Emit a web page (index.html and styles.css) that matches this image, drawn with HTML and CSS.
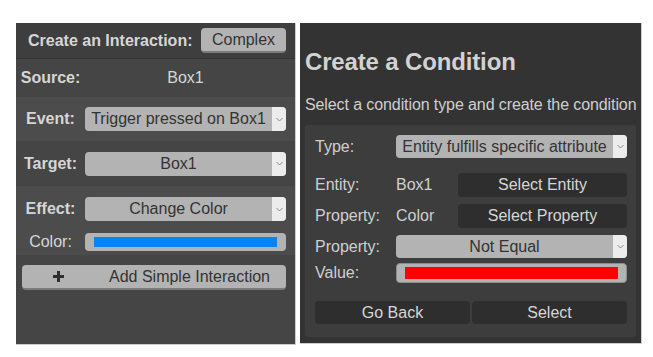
FILE: index.html
```html
<!DOCTYPE html>
<html lang="en">
  <head>
    <meta charset="UTF-8" />
    <meta name="viewport" content="width=device-width, initial-scale=1.0" />
    <title>Interactions</title>
    <link rel="stylesheet" href="styles.css">
  </head>
  <body>
    <div class="page">
      <div class="panel interaction">
        <div class="row header">
          <span class="heading">Create an Interaction:</span>
          <button class="btn light complex">Complex</button>
        </div>
        <div class="row source">
          <span class="label">Source:</span>
          <span class="value">Box1</span>
        </div>
        <div class="row event alt">
          <span class="label">Event:</span>
          <div class="select">
            <span class="select-text">Trigger pressed on Box1</span>
            <span class="select-arrow"><svg width="7" height="5" viewBox="0 0 7 5"><path d="M0.5 1 L3.5 4 L6.5 1" fill="none" stroke="#8a8a8a" stroke-width="1"/></svg></span>
          </div>
        </div>
        <div class="row target">
          <span class="label">Target:</span>
          <div class="select">
            <span class="select-text">Box1</span>
            <span class="select-arrow"><svg width="7" height="5" viewBox="0 0 7 5"><path d="M0.5 1 L3.5 4 L6.5 1" fill="none" stroke="#8a8a8a" stroke-width="1"/></svg></span>
          </div>
        </div>
        <div class="effect-group alt">
          <div class="row effect">
            <span class="label">Effect:</span>
            <div class="select">
              <span class="select-text">Change Color</span>
              <span class="select-arrow"><svg width="7" height="5" viewBox="0 0 7 5"><path d="M0.5 1 L3.5 4 L6.5 1" fill="none" stroke="#8a8a8a" stroke-width="1"/></svg></span>
            </div>
          </div>
          <div class="row color">
            <span class="label plain">Color:</span>
            <div class="color-input"><span class="swatch" style="background:#0a84f5"></span></div>
          </div>
        </div>
        <div class="add-wrap">
          <button class="btn light add">
            <svg class="plus" width="11" height="11" viewBox="0 0 11 11"><path d="M4 0h3v4h4v3H7v4H4V7H0V4h4z" fill="#2e2e2e"/></svg>
            <span>Add Simple Interaction</span>
          </button>
        </div>
      </div>

      <div class="panel condition">
        <h2>Create a Condition</h2>
        <p class="subtitle">Select a condition type and create the condition</p>
        <div class="cond-box">
          <div class="cond-row type-row">
            <span class="cond-label">Type:</span>
            <div class="select">
              <span class="select-text">Entity fulfills specific attribute</span>
              <span class="select-arrow"><svg width="7" height="5" viewBox="0 0 7 5"><path d="M0.5 1 L3.5 4 L6.5 1" fill="none" stroke="#8a8a8a" stroke-width="1"/></svg></span>
            </div>
          </div>
          <div class="cond-row pick-row first">
            <span class="cond-label">Entity:</span>
            <span class="cond-value">Box1</span>
            <button class="btn dark">Select Entity</button>
          </div>
          <div class="cond-row pick-row">
            <span class="cond-label">Property:</span>
            <span class="cond-value">Color</span>
            <button class="btn dark">Select Property</button>
          </div>
          <div class="cond-row op-row">
            <span class="cond-label">Property:</span>
            <div class="select">
              <span class="select-text">Not Equal</span>
              <span class="select-arrow"><svg width="7" height="5" viewBox="0 0 7 5"><path d="M0.5 1 L3.5 4 L6.5 1" fill="none" stroke="#8a8a8a" stroke-width="1"/></svg></span>
            </div>
          </div>
          <div class="cond-row value-row">
            <span class="cond-label">Value:</span>
            <div class="color-input boxed"><span class="swatch" style="background:#ff0000"></span></div>
          </div>
          <div class="actions">
            <button class="btn dark">Go Back</button>
            <button class="btn dark">Select</button>
          </div>
        </div>
      </div>
    </div>
  </body>
</html>
```

FILE: styles.css
```css
body {
  margin: 0;
  background-color: #ffffff;
  font-family: "Liberation Sans", Arial, sans-serif;
  font-size: 16px;
}

.page {
  display: flex;
  gap: 4px;
  padding: 23px 0 0 16px;
}

.panel {
  box-sizing: border-box;
  border-right: 1px solid #cdcdcd;
  border-bottom: 1px solid #cdcdcd;
}

/* left panel */
.interaction {
  width: 280px;
  height: 322px;
  background-color: #454545;
  color: #d6d6d6;
}

.row {
  display: flex;
  align-items: center;
  padding-right: 9px;
}

.alt {
  background-color: #4c4c4c;
}

.header {
  height: 36px;
  box-sizing: border-box;
  padding-left: 12px;
  background-color: #3e3e3e;
  border-bottom: 1px solid #363636;
}

.heading {
  font-weight: bold;
}

.complex {
  margin-left: auto;
  width: 85px;
}

.label {
  width: 69px;
  flex: none;
  text-align: center;
  font-weight: bold;
}

.label.plain {
  font-weight: normal;
}

.source {
  height: 38px;
}

.source .value {
  flex: 1;
  text-align: center;
}

.event {
  height: 44px;
}

.target {
  height: 45px;
}

.effect-group {
  height: 69px;
  padding-top: 11px;
  box-sizing: border-box;
}

.color {
  margin-top: 12px;
}

.select {
  flex: 1;
  display: flex;
  height: 24px;
  background-color: #b3b3b3;
  border-radius: 4px;
  overflow: hidden;
  color: #333;
}

.select-text {
  flex: 1;
  text-align: center;
  line-height: 24px;
  white-space: nowrap;
  overflow: hidden;
}

.select-arrow {
  width: 14px;
  flex: none;
  display: flex;
  align-items: center;
  justify-content: center;
  background-color: #ececec;
}

.color-input {
  flex: 1;
  height: 18px;
  box-sizing: border-box;
  padding: 4px 9px;
  background-color: #b3b3b3;
  border-radius: 4px;
  display: flex;
}

.swatch {
  flex: 1;
}

.btn {
  font-family: inherit;
  font-size: 16px;
  border: none;
  border-radius: 4px;
  cursor: pointer;
  padding: 0;
}

.btn.light {
  height: 25px;
  background-color: #b3b3b3;
  color: #333;
  border-bottom: 2px solid #7b7b7b;
}

.add-wrap {
  padding: 10px 9px 0 6px;
}

.add {
  width: 100%;
  height: 26px;
  border-bottom-width: 3px;
  display: flex;
  align-items: center;
}

.add .plus {
  margin-left: 31px;
}

.add span {
  margin-left: 45px;
}

/* right panel */
.condition {
  width: 342px;
  height: 321px;
  background-color: #333333;
  color: #cfcfcf;
  padding: 25px 0 0 5px;
}

.condition h2 {
  margin: 0;
  font-size: 24px;
  line-height: 28px;
  letter-spacing: -0.15px;
  color: #d2d2d2;
}

.subtitle {
  margin: 19px 0 0;
  line-height: 20px;
  letter-spacing: -0.1px;
  white-space: nowrap;
}

.cond-box {
  margin-top: 10px;
  width: 331px;
  box-sizing: border-box;
  padding: 10px 9px 13px 10px;
  background-color: #3d3d3d;
  border-radius: 3px;
}

.cond-row {
  display: flex;
  align-items: center;
}

.cond-label {
  width: 81px;
  flex: none;
}

.type-row .select {
  height: 23px;
}

.pick-row {
  height: 24px;
  margin-top: 7px;
}

.pick-row.first {
  margin-top: 15px;
}

.cond-value {
  width: 62px;
  flex: none;
}

.btn.dark {
  flex: 1;
  height: 24px;
  background-color: #2e2e2e;
  color: #d6d6d6;
}

.op-row {
  margin-top: 7px;
}

.op-row .select {
  height: 23px;
}

.value-row {
  margin-top: 5px;
}

.color-input.boxed {
  height: 20px;
  padding: 3px 8px;
  border: 1px solid #8c8c8c;
}

.actions {
  display: flex;
  gap: 2px;
  margin-top: 18px;
}

.actions .btn {
  height: 23px;
}
```
